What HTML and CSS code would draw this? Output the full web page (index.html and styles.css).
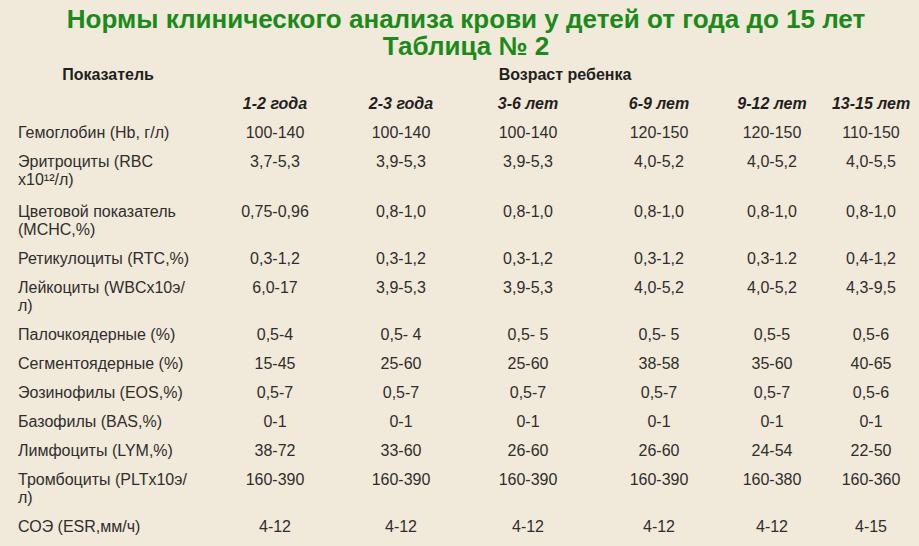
FILE: index.html
```html
<!DOCTYPE html>
<html lang="ru">
<head>
<meta charset="utf-8">
<title>Нормы клинического анализа крови у детей</title>
<link rel="stylesheet" href="styles.css">
</head>
<body>
<div class="page">
  <h1 class="title">Нормы клинического анализа крови у детей от года до 15 лет<br>Таблица № 2</h1>
  <div class="grid">
    <div class="cell head label-head">Показатель</div>
    <div class="cell head span-all">Возраст ребенка</div>

    <div class="cell"></div>
    <div class="cell age">1-2 года</div>
    <div class="cell age">2-3 года</div>
    <div class="cell age">3-6 лет</div>
    <div class="cell age">6-9 лет</div>
    <div class="cell age">9-12 лет</div>
    <div class="cell age">13-15 лет</div>

    <div class="cell label">Гемоглобин (Hb, г/л)</div>
    <div class="cell val">100-140</div><div class="cell val">100-140</div><div class="cell val">100-140</div><div class="cell val">120-150</div><div class="cell val">120-150</div><div class="cell val">110-150</div>

    <div class="cell label tall">Эритроциты (RBC x10¹²/л)</div>
    <div class="cell val tall">3,7-5,3</div><div class="cell val tall">3,9-5,3</div><div class="cell val tall">3,9-5,3</div><div class="cell val tall">4,0-5,2</div><div class="cell val tall">4,0-5,2</div><div class="cell val tall">4,0-5,5</div>

    <div class="cell label">Цветовой показатель (MCHC,%)</div>
    <div class="cell val">0,75-0,96</div><div class="cell val">0,8-1,0</div><div class="cell val">0,8-1,0</div><div class="cell val">0,8-1,0</div><div class="cell val">0,8-1,0</div><div class="cell val">0,8-1,0</div>

    <div class="cell label">Ретикулоциты (RTC,%)</div>
    <div class="cell val">0,3-1,2</div><div class="cell val">0,3-1,2</div><div class="cell val">0,3-1,2</div><div class="cell val">0,3-1,2</div><div class="cell val">0,3-1.2</div><div class="cell val">0,4-1,2</div>

    <div class="cell label">Лейкоциты (WBCx10э/л)</div>
    <div class="cell val">6,0-17</div><div class="cell val">3,9-5,3</div><div class="cell val">3,9-5,3</div><div class="cell val">4,0-5,2</div><div class="cell val">4,0-5,2</div><div class="cell val">4,3-9,5</div>

    <div class="cell label">Палочкоядерные (%)</div>
    <div class="cell val">0,5-4</div><div class="cell val">0,5- 4</div><div class="cell val">0,5- 5</div><div class="cell val">0,5- 5</div><div class="cell val">0,5-5</div><div class="cell val">0,5-6</div>

    <div class="cell label">Сегментоядерные (%)</div>
    <div class="cell val">15-45</div><div class="cell val">25-60</div><div class="cell val">25-60</div><div class="cell val">38-58</div><div class="cell val">35-60</div><div class="cell val">40-65</div>

    <div class="cell label">Эозинофилы (EOS,%)</div>
    <div class="cell val">0,5-7</div><div class="cell val">0,5-7</div><div class="cell val">0,5-7</div><div class="cell val">0,5-7</div><div class="cell val">0,5-7</div><div class="cell val">0,5-6</div>

    <div class="cell label">Базофилы (BAS,%)</div>
    <div class="cell val">0-1</div><div class="cell val">0-1</div><div class="cell val">0-1</div><div class="cell val">0-1</div><div class="cell val">0-1</div><div class="cell val">0-1</div>

    <div class="cell label">Лимфоциты (LYM,%)</div>
    <div class="cell val">38-72</div><div class="cell val">33-60</div><div class="cell val">26-60</div><div class="cell val">26-60</div><div class="cell val">24-54</div><div class="cell val">22-50</div>

    <div class="cell label">Тромбоциты (PLTx10э/л)</div>
    <div class="cell val">160-390</div><div class="cell val">160-390</div><div class="cell val">160-390</div><div class="cell val">160-390</div><div class="cell val">160-380</div><div class="cell val">160-360</div>

    <div class="cell label">СОЭ (ESR,мм/ч)</div>
    <div class="cell val">4-12</div><div class="cell val">4-12</div><div class="cell val">4-12</div><div class="cell val">4-12</div><div class="cell val">4-12</div><div class="cell val">4-15</div>
  </div>
</div>
</body>
</html>
```
FILE: styles.css
```css
html, body {
  margin: 0;
  padding: 0;
  background: #f1e9d9;
  overflow: hidden;
}

.page {
  width: 896px;
  padding: 6px 0 0 18px;
  font-family: "Liberation Sans", Arial, sans-serif;
  color: #2e2e2e;
}

.title {
  margin: 0 0 1px 0;
  font-size: 26px;
  line-height: 27px;
  font-weight: bold;
  color: #1b8a1b;
  text-align: center;
}

.grid {
  display: grid;
  grid-template-columns: 184px 146px 106px 148px 114px 112px 86px;
  font-size: 16px;
  line-height: 18px;
}

.cell {
  padding: 5px 0 6px 0;
}

.head {
  font-weight: bold;
  font-size: 16px;
  color: #1f1f1f;
}

.label-head {
  text-align: center;
  padding-right: 4px;
}

.span-all {
  grid-column: 2 / 8;
  text-align: center;
  padding-left: 14px;
}

.age {
  font-weight: bold;
  font-style: italic;
  text-align: center;
  color: #1f1f1f;
}

.label {
  padding-right: 4px;
}

.val {
  text-align: center;
}

.tall {
  padding-bottom: 9px;
}
```
